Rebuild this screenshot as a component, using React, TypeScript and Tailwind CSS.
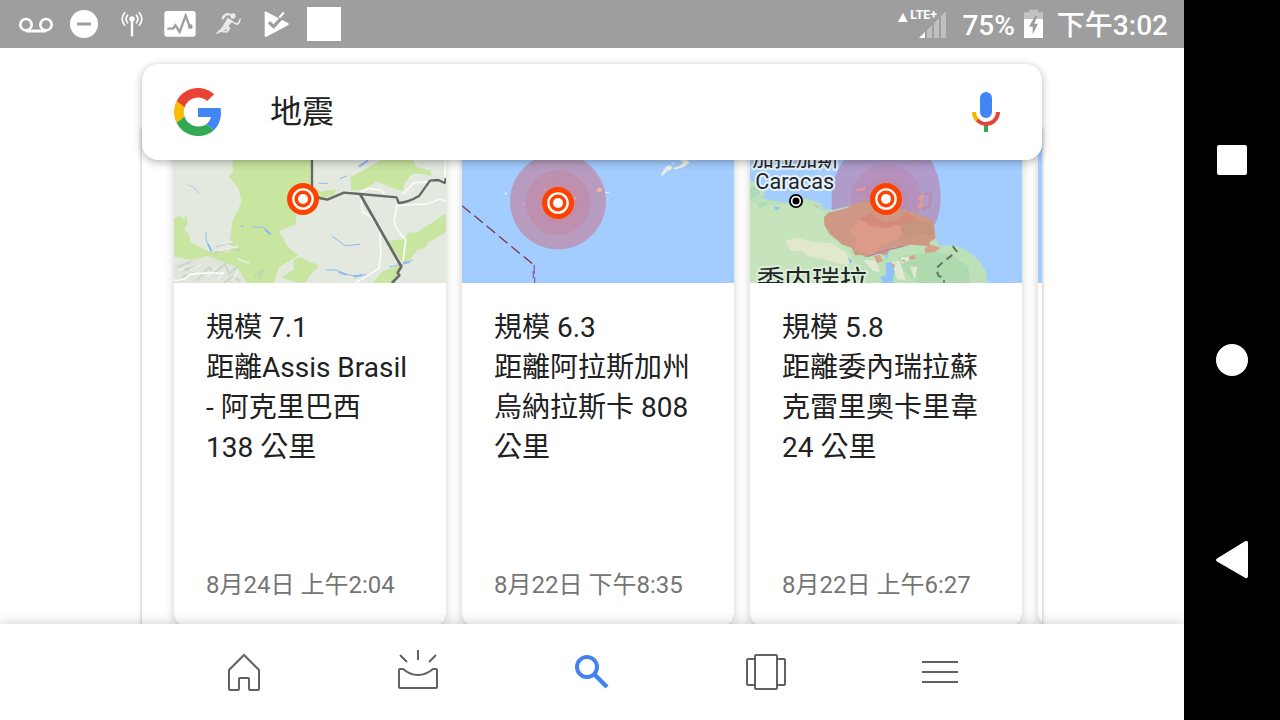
import type { ReactNode } from "react";

const statusIcons: { label: string; viewBox: string; art: ReactNode }[] = [
  {
    label: "Voicemail",
    viewBox: "36 0 144 144",
    art: (
      <g fill="none" stroke="#fff" strokeWidth="8">
        <circle cx="78" cy="74" r="17" />
        <circle cx="138" cy="74" r="17" />
        <path d="M78 93H138" strokeWidth="9" />
      </g>
    ),
  },
  {
    label: "Do not disturb",
    viewBox: "180 0 144 144",
    art: (
      <>
        <circle cx="252" cy="72" r="42" fill="#fff" />
        <path d="M231 72H273" stroke="#9e9e9e" strokeWidth="9" />
      </>
    ),
  },
  {
    label: "Broadcast",
    viewBox: "324 0 144 144",
    art: (
      <g fill="none" stroke="#fff" strokeWidth="5">
        <circle cx="396" cy="57" r="8" fill="#fff" stroke="none" />
        <path d="M396 60V109" strokeWidth="7" />
        <path d="M384 70Q372 57 384 44M408 70Q420 57 408 44" />
        <path d="M375 77Q358 57 375 37M417 77Q434 57 417 37" />
      </g>
    ),
  },
  {
    label: "Activity monitor",
    viewBox: "468 0 144 144",
    art: (
      <>
        <rect x="493" y="33" width="94" height="77" rx="8" fill="#fff" />
        <path d="M502 86H519L526 76L539 96L557 47L569 80" fill="none" stroke="#9e9e9e" strokeWidth="7" />
        <circle cx="571" cy="80" r="7" fill="#9e9e9e" />
      </>
    ),
  },
  {
    label: "Runner",
    viewBox: "612 0 144 144",
    art: (
      <g fill="#eaeaea">
        <circle cx="699" cy="48" r="8" />
        <path d="M665 53Q671 38 686 39L694 43L691 47Q680 43 675 51L671 58L665 58Z" />
        <path d="M683 53L695 60Q703 70 711 70Q717 66 720 54L723 56Q720 73 711 75Q702 74 696 67L685 78L692 85L682 98L664 97L666 93L679 93L682 87L668 79Z" />
        <path d="M668 79L684 86L668 94L645 104Q653 93 662 87Z" />
      </g>
    ),
  },
  {
    label: "Tasks",
    viewBox: "756 0 144 144",
    art: (
      <>
        <path d="M796 34L864 69Q869 72 864 76L798 111Q794 112 794 106V37Z" fill="#fff" />
        <path d="M807 67L821 80L854 43" fill="none" stroke="#9e9e9e" strokeWidth="10" />
        <path d="M835 51L849 35L854 39L842 54Z" fill="#fff" />
      </>
    ),
  },
  {
    label: "Notification",
    viewBox: "900 0 144 144",
    art: <rect x="921" y="21" width="102" height="102" fill="#fff" />,
  },
];

function Epicenter({ x, y }: { x: number; y: number }) {
  return (
    <g>
      <circle cx={x} cy={y} r="48" fill="#ff4200" />
      <circle cx={x} cy={y} r="29" fill="none" stroke="#fff" strokeWidth="7" />
      <circle cx={x} cy={y} r="15" fill="#fff" />
    </g>
  );
}

function BrazilMap() {
  return (
    <svg viewBox="30 -66 816 465" className="block h-[155px] w-full" role="img" aria-label="Assis Brasil">
      <rect x="30" y="-66" width="816" height="465" fill="#e3e9df" />
      <g fill="#c9e6a0">
        <path d="M202 -66H443V110L470 125L516 118L510 136L480 144L418 150L396 200V222L345 243L372 290L402 316L388 326L345 352L329 399H262L232 340L190 310L210 290L198 270L205 215L233 155L222 112L192 78L207 70Z" />
        <path d="M30 205L50 198L60 210L68 190L71 220L62 240L74 252L80 276L122 298L140 306L178 303L215 312L245 330L300 360L290 399H250L200 345L130 318L80 330L30 320Z" />
        <path d="M352 382L388 360L390 330L408 320L432 334L462 344L458 358L440 372L427 395L400 399L370 388Z" />
        <path d="M560 80L622 48L650 30H750L755 50L800 62L802 78L775 72L745 72L720 102L718 122L690 116L640 94L600 118L562 122Z" />
        <path d="M672 273L720 268L736 245L756 250L846 190V247L796 276L782 294L760 300L738 330L716 340Z" />
        <path d="M625 399L655 365L705 345L712 353L690 399Z" />
      </g>
      <path d="M30 345L70 330L115 322L160 330L220 350L247 399H30Z" fill="#dfe5da" />
      <g fill="none" stroke="#bfc8ba" strokeWidth="6" opacity=".55">
        <path d="M40 352L78 336L64 360L96 350M98 392L135 352L150 370L182 342L196 372L220 350M155 292L190 279L212 286M150 308L200 296L230 300M180 398L206 380L230 393M270 378L294 362L285 392M54 380L90 370" />
      </g>
      <g fill="none" stroke="#f1f3ee" strokeWidth="5" opacity=".75">
        <path d="M42 362L75 345M78 360L112 344M130 382L157 350M162 390L184 355M205 390L224 362M167 282L205 275M165 302L222 290M220 326L255 340" />
      </g>
      <g fill="none" stroke="#fbfcf8" strokeWidth="5">
        <path d="M30 390Q65 394 76 374Q115 366 180 370" />
        <path d="M590 135L596 185L620 200L648 240L650 310L645 355L575 399" />
        <path d="M590 126L615 115L650 120L662 130M700 160L690 215L698 236L725 270L717 335M700 168Q760 160 785 164L828 147L846 154M714 135L750 98L800 96M844 30V96" />
      </g>
      <g fill="none" stroke="#8fb8f3" strokeWidth="3">
        <path d="M505 259L544 287L588 283M126 248V270L143 305M230 229H240M264 230L298 232L320 252M486 360H515L545 373L575 378L608 374M675 351L720 342L746 330M465 100H492M528 86L550 77" />
        <path d="M585 50L612 31M132 282L142 303M302 238L320 253M525 366L548 374M570 380L595 375M719 338L737 337" strokeWidth="6" />
        <path d="M71 104L90 112L104 132" stroke="#b6cdf0" />
      </g>
      <g fill="none" stroke="#666966" strokeLinejoin="round">
        <path d="M444 -66V125L466 144L490 149L540 128L588 132L698 142L704 159Q735 156 766 137L798 92L823 90L842 99L846 84" strokeWidth="7" />
        <path d="M588 132L712 350L701 368L706 376L684 399" strokeWidth="8" />
      </g>
      <Epicenter x={417} y={147} />
    </svg>
  );
}

function AlaskaMap() {
  return (
    <svg viewBox="24 -66 816 465" className="block h-[155px] w-full" role="img" aria-label="烏納拉斯卡">
      <rect x="24" y="-66" width="816" height="465" fill="#a3ccff" />
      <g fill="#f4eee7">
        <path d="M620 75L635 52L646 45L655 52L650 60L640 62L625 77ZM658 55L680 46L688 36L678 31H700L707 38L690 50L662 59ZM150 133L157 125L159 133ZM446 125L467 127L464 130L448 129ZM655 36L663 39L656 42Z" />
      </g>
      <circle cx="312" cy="154" r="144" fill="#b79cbf" />
      <circle cx="312" cy="158" r="97" fill="#be90af" />
      <circle cx="312" cy="158" r="62" fill="#c28da9" />
      <g fill="#ffb7a5">
        <path d="M426 123L434 113L442 115L444 122L434 126ZM205 158L216 167L210 165ZM357 145L366 141L363 149ZM270 119L274 114L276 120ZM421 42L428 37L427 42Z" />
      </g>
      <path d="M24 167L236 342" fill="none" stroke="#7b3947" strokeWidth="4" strokeDasharray="33 15" />
      <path d="M241 345V368L238 366V382L242 383V399" fill="none" stroke="#8568a8" strokeWidth="4" />
      <Epicenter x={312} y={159} />
    </svg>
  );
}

function VenezuelaMap() {
  return (
    <svg viewBox="30 -66 816 465" className="block h-[155px] w-full" role="img" aria-label="委內瑞拉">
      <rect x="30" y="-66" width="816" height="465" fill="#a3ccff" />
      <path d="M30 92L60 103L75 122L68 145L105 153L145 160L198 145L238 158L252 178L285 180L355 160L585 245L590 272L598 289L632 284L676 298L716 330L738 365L742 399H30Z" fill="#bce0b7" />
      <path d="M30 160L100 165L185 155L250 182L260 250L330 305L360 370L325 399H30Z" fill="#c5e4bb" />
      <path d="M52 160L80 155L82 165L58 175ZM30 112L58 105L64 120L48 140L30 146Z" fill="#addbb7" />
      <path d="M136 272L170 264L220 276L275 280L315 306L340 345L290 340L248 326L205 319L185 302L150 302Z" fill="#e1e9ca" />
      <path d="M475 320L585 306L640 318L685 350L690 399H530L490 360Z" fill="#aedaae" />
      <path d="M438 338L458 336L465 356L457 398L428 399L421 382L437 376ZM394 346L405 340L408 357L396 365ZM324 323L336 330L331 346ZM438 307L446 306L440 330L436 322ZM102 170L120 170L116 179L105 178Z" fill="#8fc1fa" />
      <path d="M455 337L479 332L497 390L472 388ZM510 350L532 350L525 390ZM370 330L408 331L420 365L399 364ZM482 322L513 320L508 331L486 341Z" fill="#e2e9d2" />
      <path d="M275 180V138Q275 80 312 30L340 -10H540Q601 50 602 140Q602 190 584 225L470 180L355 162Z" fill="#af9ccb" />
      <circle cx="438" cy="147" r="105" fill="#b78eb5" opacity=".65" />
      <circle cx="438" cy="147" r="66" fill="#c288a5" opacity=".4" />
      <path d="M252 202L265 188L320 174L345 160L375 154L500 180L580 210L587 265L568 277L570 288L510 284L489 291L458 292L435 316L408 309L376 322L368 315L344 315L335 293L305 283L292 270L270 253L253 225Z" fill="#cf9885" />
      <path d="M325 240L370 202L415 226L480 215L495 245L470 270L421 289L395 318L345 300L348 260Z" fill="#dc9a88" />
      <path d="M390 190L435 218L475 210L500 185L528 207L500 225L468 226L438 235L395 228L358 208Z" fill="#d48a78" />
      <path d="M480 224L530 210L581 226L583 258L540 252L510 264L485 250Z" fill="#c5957c" />
      <path d="M554 294L575 285L602 293L583 307L556 309ZM506 322L522 314L527 326L510 330ZM402 318L418 314L430 332L411 340ZM453 346L463 340L465 355ZM220 162L238 172L230 171ZM484 333L491 328L498 337Z" fill="#d9a08b" />
      <path d="M346 117L370 114L376 106L375 120L354 123ZM358 145H376V147H358ZM533 139L552 132L548 150L552 166L536 176L530 170L542 158ZM520 38L528 36L530 42Z" fill="#e6998f" />
      <path d="M552 132H573L568 170L546 179" fill="none" stroke="#bd8493" strokeWidth="7" opacity=".6" />
      <path d="M382 320L440 300L490 289" fill="none" stroke="#b483a6" strokeWidth="4" />
      <path d="M638 288L650 304L605 340L588 356L596 378L612 384V398" fill="none" stroke="#65765f" strokeWidth="6" strokeDasharray="22 15" />
      <g stroke="#e6f2fb" strokeWidth="12" paintOrder="stroke" strokeLinejoin="round" fill="#20252b" className="font-['Roboto','Noto_Sans_CJK_TC',sans-serif]">
        <text x="37" y="49" fontSize="65">加拉加斯</text>
        <text x="46" y="116" fontSize="65">Caracas</text>
        <text x="50" y="421" fontSize="83" stroke="#dcefd5">委内瑞拉</text>
      </g>
      <circle cx="168" cy="153" r="21" fill="#000" />
      <circle cx="168" cy="153" r="13" fill="none" stroke="#fff" strokeWidth="5" />
      <Epicenter x={438} y={147} />
    </svg>
  );
}

const quakes: { title: string; place: ReactNode; time: string; map: ReactNode }[] = [
  {
    title: "規模 7.1",
    place: <>距離Assis Brasil<br />- 阿克里巴西<br />138 公里</>,
    time: "8月24日 上午2:04",
    map: <BrazilMap />,
  },
  {
    title: "規模 6.3",
    place: <>距離阿拉斯加州<br />烏納拉斯卡 808<br />公里</>,
    time: "8月22日 下午8:35",
    map: <AlaskaMap />,
  },
  {
    title: "規模 5.8",
    place: <>距離委內瑞拉蘇<br />克雷里奧卡里韋<br />24 公里</>,
    time: "8月22日 上午6:27",
    map: <VenezuelaMap />,
  },
];

const cardClass =
  "flex h-[500px] w-[272px] shrink-0 flex-col overflow-hidden rounded-2xl bg-white shadow-[0_1px_10px_rgba(0,0,0,0.2)]";

const tabs: { label: string; art: ReactNode }[] = [
  { label: "首頁", art: <path d="M9 37V18L24 3L39 18V37Q39 38 38 38H30Q29 38 29 37V27Q29 26 28 26H20Q19 26 19 27V37Q19 38 18 38H10Q9 38 9 37Z" /> },
  { label: "最新動態", art: <path d="M24 -2V8M6 3L13 10M42 3L35 10M5 17H9Q16 23 24 23T39 17H42Q43 17 43 18V35Q43 36 42 36H6Q5 36 5 35V18Q5 17 6 17" /> },
  {
    label: "搜尋",
    art: (
      <g stroke="#4482ed" strokeWidth="4">
        <circle cx="19" cy="15" r="10" />
        <path d="M26 22L39 35" strokeWidth="4.5" />
      </g>
    ),
  },
  {
    label: "近期內容",
    art: (
      <>
        <rect x="13" y="3" width="22" height="34" rx="1" />
        <path d="M13 7H6Q5 7 5 8V32Q5 33 6 33H13M35 7H42Q43 7 43 8V32Q43 33 42 33H35" />
      </>
    ),
  },
  { label: "更多", art: <path d="M6 10H42M6 20H42M6 30H42" /> },
];

export default function App() {
  return (
    <div lang="zh-Hant" className="flex h-screen overflow-hidden bg-white font-['Roboto','Noto_Sans_CJK_TC',sans-serif] text-[#212121]">
      <div className="flex min-w-0 flex-1 flex-col">
        <header className="flex h-12 shrink-0 items-center justify-between bg-[#9e9e9e] pr-4 pl-3 text-white">
          <div className="flex">
            {statusIcons.map((icon) => (
              <svg key={icon.label} viewBox={icon.viewBox} className="size-12" role="img" aria-label={icon.label}>
                {icon.art}
              </svg>
            ))}
          </div>
          <div className="flex h-12 items-center text-[28px] leading-10 font-medium whitespace-nowrap">
            <svg viewBox="48 0 156 144" className="mr-[13px] h-12 w-[52px]">
              <path d="M66 38L80 66H51Z" fill="#fff" />
              <path d="M114 114L132 96V114Z" fill="#fff" />
              <path d="M138 90L153 75V114H138ZM159 69L174 54V114H159ZM180 48L195 34V114H180Z" fill="#c0c0c0" />
              <text x="88" y="56" fontSize="37" fill="#fff" className="font-['Roboto',sans-serif] font-bold">LTE+</text>
            </svg>
            <span className="pt-1">75%</span>
            <svg viewBox="426 0 72 144" className="mr-[11px] ml-[7px] h-12 w-6" role="img" aria-label="Charging">
              <path d="M447 29H474V37H489V57H432V37H447Z" fill="#c2c2c2" />
              <path d="M432 57H489V114H432Z" fill="#fff" />
              <path d="M465 47L447 80H458V103L474 71H463L472 47Z" fill="#9e9e9e" />
            </svg>
            <time className="pt-1">下午3:02</time>
          </div>
        </header>

        <main className="min-h-0 flex-1 overflow-hidden pt-4">
          <form
            className="relative z-10 mx-auto flex h-24 w-full max-w-[900px] items-center rounded-2xl bg-white pr-10 pl-8 shadow-[0_2px_8px_rgba(0,0,0,0.3)]"
            onSubmit={(event) => event.preventDefault()}
          >
            <svg viewBox="0 0 48 48" className="size-12 shrink-0" role="img" aria-label="Google">
              <path fill="#EA4335" d="M24 9.5c3.54 0 6.71 1.22 9.21 3.6l6.85-6.85C35.9 2.38 30.47 0 24 0 14.62 0 6.51 5.38 2.56 13.22l7.98 6.19C12.43 13.72 17.74 9.5 24 9.5z" />
              <path fill="#4285F4" d="M46.98 24.55c0-1.57-.15-3.09-.38-4.55H24v9.02h12.94c-.58 2.96-2.26 5.48-4.78 7.18l7.73 6c4.51-4.18 7.09-10.36 7.09-17.65z" />
              <path fill="#FBBC05" d="M10.53 28.59c-.48-1.45-.76-2.99-.76-4.59s.27-3.14.76-4.59l-7.98-6.19C.92 16.46 0 20.12 0 24c0 3.88.92 7.54 2.56 10.78l7.97-6.19z" />
              <path fill="#34A853" d="M24 48c6.48 0 11.93-2.13 15.89-5.81l-7.73-6c-2.15 1.45-4.92 2.3-8.16 2.3-6.26 0-11.57-4.22-13.47-9.91l-7.98 6.19C6.51 42.62 14.62 48 24 48z" />
            </svg>
            <input
              type="text"
              aria-label="搜尋"
              defaultValue="地震"
              className="ml-12 h-12 min-w-0 flex-1 bg-transparent text-[32px] leading-[50px] outline-none"
            />
            <button type="button" aria-label="語音搜尋" className="shrink-0">
              <svg viewBox="90 84 96 144" className="h-12 w-8">
                <rect x="120" y="96" width="36" height="78" rx="18" fill="#4285f4" />
                <path d="M132 190H144V216H132Z" fill="#34a853" />
                <path d="M102 156Q102 171 113 181" fill="none" stroke="#f4b400" strokeWidth="12" />
                <path d="M112 180Q123 192 138 192Q153 192 163 182Q174 171 174 156" fill="none" stroke="#e14638" strokeWidth="12" />
              </svg>
            </button>
          </form>

          <section className="mx-auto -mt-8 flex w-full max-w-[900px] gap-4 overflow-hidden bg-white pl-8 shadow-[0_0_4px_rgba(0,0,0,0.3)]" aria-label="地震">
            {quakes.map((quake) => (
              <article key={quake.title} className={cardClass}>
                {quake.map}
                <div className="flex flex-1 flex-col justify-between px-8 py-[25px]">
                  <div className="text-[28px] leading-10 whitespace-nowrap">
                    <h2>{quake.title}</h2>
                    <p>{quake.place}</p>
                  </div>
                  <time className="text-2xl leading-9 whitespace-nowrap text-[#757575]">{quake.time}</time>
                </div>
              </article>
            ))}
            <article className={cardClass} aria-hidden="true">
              <div className="h-[155px] bg-[#a3ccff]" />
            </article>
          </section>
        </main>

        <nav className="relative z-10 h-24 shrink-0 bg-white shadow-[0_0_12px_rgba(0,0,0,0.22)]">
          <div className="mx-auto flex h-full w-full max-w-[870px]">
            {tabs.map((tab) => (
              <button key={tab.label} type="button" aria-label={tab.label} className="flex flex-1 items-center justify-center">
                <svg viewBox="0 -4 48 48" className="size-12" fill="none" stroke="#616161" strokeWidth="2">
                  {tab.art}
                </svg>
              </button>
            ))}
          </div>
        </nav>
      </div>

      <aside className="relative z-20 flex w-24 shrink-0 flex-col bg-black py-[60px]">
        <button type="button" aria-label="Overview" className="flex flex-1 items-center justify-center">
          <span className="size-[30px] rounded-xs bg-white" />
        </button>
        <button type="button" aria-label="Home" className="flex flex-1 items-center justify-center">
          <span className="size-8 rounded-full bg-white" />
        </button>
        <button type="button" aria-label="Back" className="flex flex-1 items-center justify-center">
          <svg viewBox="0 0 32 40" className="h-10 w-8">
            <path d="M1 18.5L29 1.2Q32 0 32 3V36Q32 39 29 37.8L1 21.5Q-1 20 1 18.5Z" fill="#fff" />
          </svg>
        </button>
      </aside>
    </div>
  );
}
